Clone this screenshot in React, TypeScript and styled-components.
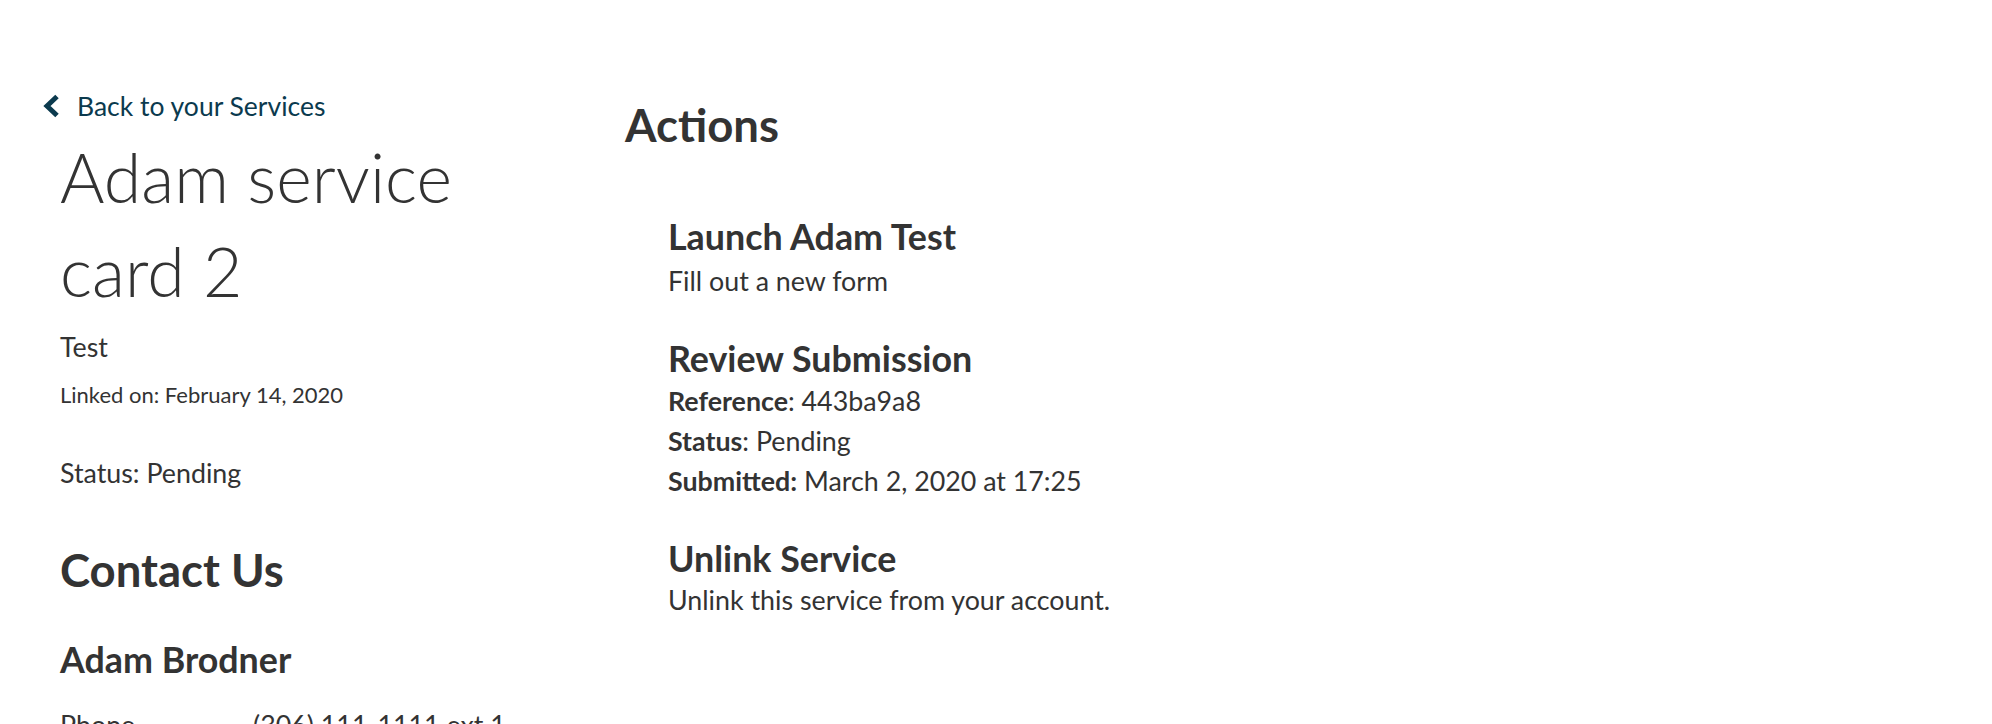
import React from "react";
import styled, { createGlobalStyle } from "styled-components";

const Global = createGlobalStyle`
  html, body { margin: 0; padding: 0; background: #ffffff; }
  body {
    font-family: "Source Sans Pro", Lato, "Noto Sans", sans-serif;
    color: #333333;
    -webkit-font-smoothing: antialiased;
  }
  * { box-sizing: border-box; }
`;

const Page = styled.main`
  display: grid;
  grid-template-columns: 583px 1fr;
  padding: 86px 0 0 42px;
  min-height: 724px;
`;

const Sidebar = styled.section`
  display: flex;
  flex-direction: column;
  align-items: flex-start;
`;

const BackLink = styled.a`
  display: inline-flex;
  align-items: center;
  gap: 17px;
  color: #0b3a4e;
  font-size: 26.5px;
  line-height: 40px;
  text-decoration: none;
  cursor: pointer;
`;

const Details = styled.div`
  padding-left: 18px;
  display: flex;
  flex-direction: column;
`;

const Title = styled.h1`
  margin: 4px 0 0;
  font-weight: 300;
  font-size: 68px;
  line-height: 94px;
  max-width: 480px;
`;

const Text = styled.p<{ $top?: number }>`
  margin: ${(p) => p.$top ?? 0}px 0 0;
  font-size: 26.8px;
  line-height: 40px;
`;

const SmallText = styled.p<{ $top?: number }>`
  margin: ${(p) => p.$top ?? 0}px 0 0;
  font-size: 22px;
  line-height: 34px;
`;

const SectionHeading = styled.h2<{ $top?: number }>`
  margin: ${(p) => p.$top ?? 0}px 0 0;
  font-size: 45.5px;
  font-weight: 700;
  line-height: 50px;
`;

const SubHeading = styled.h3<{ $top?: number; $gap?: number }>`
  margin: ${(p) => p.$top ?? 0}px 0 ${(p) => p.$gap ?? 0}px;
  font-size: 35.8px;
  font-weight: 700;
  line-height: 40px;
`;

const ContactRow = styled.div`
  display: grid;
  grid-template-columns: 193px 1fr;
  margin-top: 25px;
  font-size: 26.8px;
  line-height: 40px;
`;

const Main = styled.section`
  display: flex;
  flex-direction: column;
`;

const ActionList = styled.div`
  display: flex;
  flex-direction: column;
  gap: 38px;
  margin-top: 67px;
  padding-left: 43px;
`;

const ActionItem = styled.div`
  display: flex;
  flex-direction: column;
`;

const Label = styled.strong`
  font-weight: 700;
`;

const Chevron = () => (
  <svg width="18" height="24" viewBox="0 0 18 24" aria-hidden="true">
    <polyline
      points="15,2.5 5,12 15,21.5"
      fill="none"
      stroke="#0b3a4e"
      strokeWidth="5"
      strokeLinejoin="miter"
    />
  </svg>
);

export default function App() {
  return (
    <>
      <Global />
      <Page>
        <Sidebar>
          <BackLink>
            <Chevron />
            Back to your Services
          </BackLink>
          <Details>
            <Title>Adam service card 2</Title>
            <Text $top={9}>Test</Text>
            <SmallText $top={11}>Linked on: February 14, 2020</SmallText>
            <Text $top={41}>Status: Pending</Text>
            <SectionHeading $top={52}>Contact Us</SectionHeading>
            <SubHeading $top={45}>Adam Brodner</SubHeading>
            <ContactRow>
              <span>Phone</span>
              <span>(306) 111-1111 ext 1</span>
            </ContactRow>
          </Details>
        </Sidebar>
        <Main>
          <SectionHeading $top={14}>Actions</SectionHeading>
          <ActionList>
            <ActionItem>
              <SubHeading $gap={4}>Launch Adam Test</SubHeading>
              <Text>Fill out a new form</Text>
            </ActionItem>
            <ActionItem>
              <SubHeading $gap={2}>Review Submission</SubHeading>
              <Text>
                <Label>Reference</Label>: 443ba9a8
              </Text>
              <Text>
                <Label>Status</Label>: Pending
              </Text>
              <Text>
                <Label>Submitted:</Label> March 2, 2020 at 17:25
              </Text>
            </ActionItem>
            <ActionItem>
              <SubHeading $gap={1}>Unlink Service</SubHeading>
              <Text>Unlink this service from your account.</Text>
            </ActionItem>
          </ActionList>
        </Main>
      </Page>
    </>
  );
}
